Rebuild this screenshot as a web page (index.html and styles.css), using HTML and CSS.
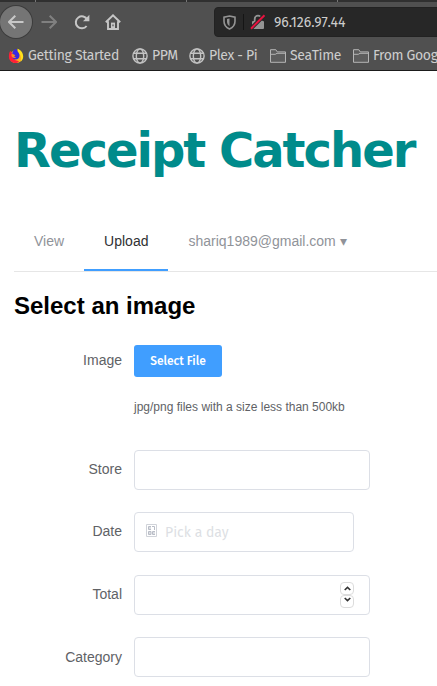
FILE: index.html
```html
<!DOCTYPE html>
<html lang="en">
<head>
<meta charset="utf-8">
<title>Receipt Catcher</title>
<link rel="stylesheet" href="styles.css">
</head>
<body>
<svg class="defs" width="0" height="0">
  <symbol id="globe" viewBox="0 0 16 16"><g fill="none" stroke="#c3c3c3" stroke-width="1.4"><circle cx="8" cy="8" r="7.1"/><ellipse cx="8" cy="8" rx="3.7" ry="7.1"/><path d="M1.5 5.2h13M1.5 10.8h13"/></g></symbol>
  <symbol id="folder" viewBox="0 0 16 14"><path d="M.5 13.3V.7h5.3l1.5 2.2h8.2v10.4z" fill="#5d5d5d" stroke="#b5b5b5"/><path d="M.5 5.3h4.8L7 4.3h8.5" fill="none" stroke="#b5b5b5"/></symbol>
</svg>
<header class="browser">
  <div class="tabstrip"></div>
  <div class="toolbar">
    <span class="back"><svg width="16" height="16" viewBox="0 0 16 16"><path d="M15.5 8H1.2M7.3 1.8L1 8l6.3 6.2" fill="none" stroke="#c8c8c8" stroke-width="2"/></svg></span>
    <svg class="forward" width="16" height="16" viewBox="0 0 16 16"><path d="M.5 8h14.3M8.7 1.8L15 8l-6.3 6.2" fill="none" stroke="#808080" stroke-width="2"/></svg>
    <svg class="reload" width="16" height="16" viewBox="0 0 16 16"><path d="M13.2 5.7A6 6 0 1 0 12.6 12" fill="none" stroke="#c6c6c6" stroke-width="2"/><path d="M15.4.8v6.5H9z" fill="#c6c6c6"/></svg>
    <svg class="home" width="16" height="16" viewBox="0 0 16 16"><path d="M.8 8.2L8 1.3l7.2 6.9M3 7.2V15h10V7.2" fill="none" stroke="#c6c6c6" stroke-width="1.9"/><path d="M6 15V8.6h4V15z" fill="#c6c6c6"/><path d="M7.4 10.5h1.2v1.8H7.4z" fill="#505050"/></svg>
    <div class="urlbar">
      <svg class="shield" width="13" height="15" viewBox="0 0 13 15"><path d="M6.5 1L12 2.2v4.1c0 3.8-2.3 6.3-5.5 7.7C3.3 12.6 1 10.1 1 6.3V2.2z" fill="none" stroke="#949494" stroke-width="1.6"/><path d="M6.5 3.5L4 4.1v2.5c0 2.1.9 3.6 2.5 4.7z" fill="#949494"/></svg>
      <svg class="lock" width="16" height="16" viewBox="0 0 16 16"><path d="M4.7 7.5V5a3.3 3.3 0 0 1 6.6 0v2.5" fill="none" stroke="#949494" stroke-width="1.8"/><rect x="2" y="7" width="12" height="8" rx="1" fill="#949494"/><path d="M1 14.5L14.5 1" stroke="#272727" stroke-width="4"/><path d="M1 14.7L14.5 1.2" stroke="#e8123f" stroke-width="2"/></svg>
      <span class="address">96.126.97.44</span>
    </div>
  </div>
  <nav class="bookmarks">
    <a class="bm bm-start"><svg width="16" height="16" viewBox="0 0 16 16"><circle cx="8" cy="8.6" r="6.4" fill="#ffb01c"/><path d="M2.3 2.8L4 5l3 7 4 1.2c-1 1.600-3 2.200-5 1.800C2.500 14.200.8 11.500.9 8.500 1 6 1.300 4.300 2.300 2.800z" fill="#ff2038"/><path d="M9.500.7c3.500 1.200 5.700 4.300 5.700 7.800 0 2-1 4-2.700 5.300 1-3 .8-5.800-1-8C10.300 4.300 9.300 2.800 9.500.7z" fill="#ffe21c"/><path d="M4.500 3.800C5.500 2 7 1.300 8.700 1c0 2 2.800 3.500 2.800 6.500 0 2.500-1.700 4-3.800 4S4.200 9.800 4.200 8z" fill="#3a2ae0"/><path d="M3.500 5.800l2 .5 1.800.9-1.300 1.300 2.200.8c-1.700 1.300-4 .7-4.700-1.300z" fill="#ff8a20"/></svg><span>Getting Started</span></a>
    <a class="bm bm-ppm"><svg width="16" height="16"><use href="#globe"/></svg><span>PPM</span></a>
    <a class="bm bm-plex"><svg width="16" height="16"><use href="#globe"/></svg><span>Plex - Pi</span></a>
    <a class="bm bm-sea"><svg width="16" height="14"><use href="#folder"/></svg><span>SeaTime</span></a>
    <a class="bm bm-goog"><svg width="16" height="14"><use href="#folder"/></svg><span>From Goog</span></a>
  </nav>
</header>
<main>
  <h1>Receipt Catcher</h1>
  <nav class="menu">
    <a class="item">View</a>
    <a class="item active">Upload</a>
    <a class="item">shariq1989@gmail.com ▾</a>
  </nav>
  <h2>Select an image</h2>
  <form>
    <div class="row upload">
      <label>Image</label>
      <div><button type="button"><span>Select File</span></button><p class="tip">jpg/png files with a size less than 500kb</p></div>
    </div>
    <div class="row"><label>Store</label><div class="field"></div></div>
    <div class="row"><label>Date</label><div class="field date"><svg width="11" height="13" viewBox="0 0 11 13"><path d="M.5.5h10v12H.5z" fill="none" stroke="#d0d3d9"/><path d="M5 2.5H2.500V5.500H5M2.500 4H5M6 2.500h2.500V6M2.500 7.500H5v3H2.500zM2.500 9H5M9 7.500H6.500v3H9M6.500 9H9" fill="none" stroke="#b9bdc6"/></svg><span>Pick a day</span></div></div>
    <div class="row"><label>Total</label><div class="field total"><span class="spinner"><i><svg width="7" height="5" viewBox="0 0 7 5"><path d="M.7 4L3.500 1.300 6.300 4" fill="none" stroke="#333" stroke-width="1.600"/></svg></i><i><svg width="7" height="5" viewBox="0 0 7 5"><path d="M.7 1l2.800 2.700L6.300 1" fill="none" stroke="#333" stroke-width="1.600"/></svg></i></span></div></div>
    <div class="row category"><label>Category</label><div class="field"></div></div>
  </form>
</main>
</body>
</html>
```
FILE: styles.css
```css
* { box-sizing: border-box; }
html, body { height: 686px; overflow: hidden; }
body { margin: 0; background: #fff; font-family: "Liberation Sans", sans-serif; color: #606266; }
svg { display: block; flex: none; }
.defs { position: absolute; }

.browser { height: 71px; background: #505050; border-bottom: 1px solid #1b1b1b; overflow: hidden; font-family: "Fira Sans", "Noto Sans", sans-serif; color: #cdcdcd; }
.tabstrip { height: 2px; background: linear-gradient(90deg, transparent 35px, #777 35px, #777 36px, transparent 36px, transparent 186px, #777 186px, #777 187px, transparent 187px, transparent 337px, #777 337px, #777 338px, transparent 338px), #303030; }
.toolbar { display: flex; align-items: center; height: 40px; }
.back { display: flex; align-items: center; justify-content: center; flex: none; width: 32px; height: 32px; border-radius: 50%; background: #757575; box-shadow: 0 0 0 1px #3c3c3c; }
.forward { margin-left: 9px; }
.reload { margin-left: 17px; }
.home { margin-left: 15px; }
.urlbar { display: flex; align-items: center; flex: none; width: 240px; height: 30px; margin-left: 93px; padding-left: 8px; background: #272727; border: 1px solid #222; border-radius: 4px; }
.lock { box-sizing: content-box; margin-left: 7px; padding-left: 6px; border-left: 1px solid #151515; }
.address { margin-left: 8px; font-size: 14px; }

.bookmarks { display: flex; align-items: center; height: 27px; padding-left: 8px; font-size: 14px; }
.bm { display: flex; align-items: center; gap: 4px; flex: none; white-space: nowrap; }
.bm span { line-height: 20px; letter-spacing: -0.35px; }
.bm-start { width: 124px; }
.bm-ppm { width: 57px; }
.bm-plex { width: 81px; }
.bm-sea { width: 83px; }

main { padding-left: 14px; }
h1 { margin: 51px 0 33px; font: bold 48px/56px "DejaVu Sans", sans-serif; letter-spacing: -2px; color: #008b8b; white-space: nowrap; }
.menu { display: flex; height: 61px; border-bottom: 1px solid #e6e6e6; font-size: 14px; color: #909399; }
.item { height: 60px; padding: 0 20px; line-height: 60px; white-space: nowrap; }
.active { color: #303133; border-bottom: 2px solid #409eff; }
h2 { margin: 20px 0; font-size: 24px; line-height: 28px; color: #000; }
.row { display: flex; height: 40px; margin-bottom: 22.5px; font-size: 14px; }
.row label { width: 120px; padding-right: 12px; text-align: right; line-height: 39.5px; }
.upload label, .category label { line-height: 41px; }
.upload { height: 87.2px; }
button { display: flex; align-items: center; justify-content: center; width: 88px; height: 32px; margin-top: 5px; padding: 0; border: 0; border-radius: 3px; background: #409eff; color: #fff; font: 500 12px "Fira Sans", "Noto Sans", sans-serif; }
.tip { margin: 23px 0 0; font-size: 12px; line-height: 14px; }
.field { display: flex; align-items: center; width: 236px; height: 40px; border: 1px solid #dcdfe6; border-radius: 4px; }
.date { width: 220px; padding-left: 11px; font-family: "Fira Sans", "Noto Sans", sans-serif; color: #dddfe4; }
.date span { margin-left: 8px; }
.date svg { margin-bottom: 3px; }
.total { justify-content: flex-end; padding-right: 15px; }
.spinner { display: flex; flex-direction: column; width: 14px; }
.spinner i { display: flex; align-items: center; justify-content: center; height: 13px; border: 1px solid #dcdcdc; border-radius: 4px; }
.spinner i + i svg { margin-bottom: 3px; }
```
